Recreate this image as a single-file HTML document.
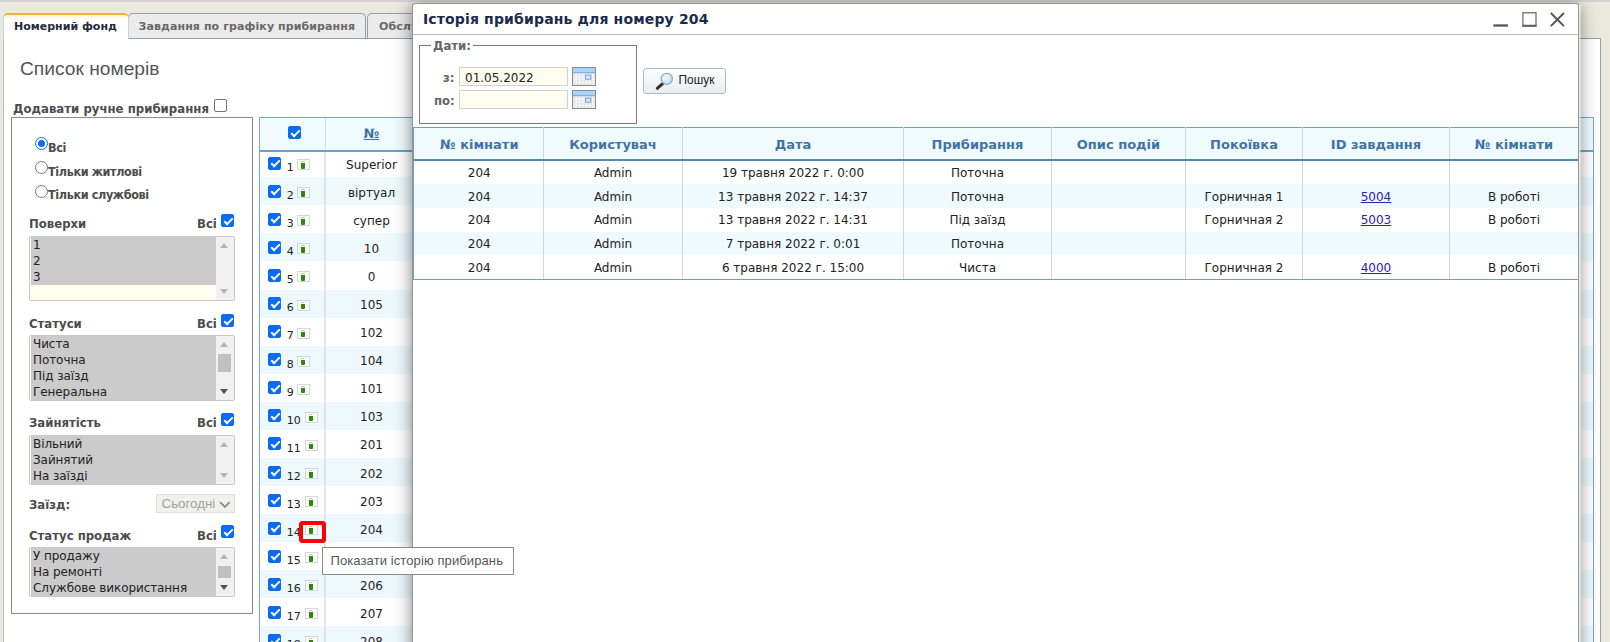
<!DOCTYPE html>
<html lang="uk">
<head>
<meta charset="utf-8">
<title>Номерний фонд</title>
<style>
*{box-sizing:border-box}
html,body{margin:0;padding:0}
body{width:1610px;height:642px;overflow:hidden;position:relative;background:#eae9dd;font-family:"DejaVu Sans","Liberation Sans",sans-serif;font-size:12px;color:#222}
.abs{position:absolute}
#topstrip{left:0;top:0;width:1610px;height:2px;background:#d3d3d3}
/* tabs */
.tab{position:absolute;top:13px;height:25px;border:1px solid #93a1ab;border-bottom:none;border-radius:5px 5px 0 0;background:#ebebeb;font-weight:bold;font-size:11px;letter-spacing:.09px;line-height:25px;color:#696969;white-space:nowrap;padding-left:9.5px}
.tab.active{letter-spacing:0;padding-left:10px;background:linear-gradient(#fff3d2 0,#fff 5px);color:#262a3c;border-color:#c9d2da;border-top:2px solid #f0b240;line-height:23.5px;z-index:3;height:26px}
#panel{left:3px;top:38px;width:1598px;height:620px;background:#fff;border:1px solid #93a1ab;border-left-color:#b4bfc8}
h1{position:absolute;left:20px;top:58px;margin:0;font:normal 19.2px "Liberation Sans",sans-serif;color:#555;white-space:nowrap}
#manual{left:13px;top:100.5px;letter-spacing:.03px;font:bold 13px/16px "DejaVu Sans Condensed","DejaVu Sans",sans-serif;color:#4c4c4c;white-space:nowrap}
.cb{display:inline-block;width:13px;height:13px;border:1px solid #767676;border-radius:2px;background:#fff;vertical-align:middle;position:relative}
.cb.on{background:#0a6cf5;border-color:#0a6cf5}
.cb.on::after{content:"";position:absolute;left:3.5px;top:0.5px;width:3px;height:7px;border:solid #fff;border-width:0 2px 2px 0;transform:rotate(45deg)}
#filters{left:11px;top:117px;width:242px;height:497px;border:1px solid #8b8b8b;background:#fff}
.radio{position:absolute;width:13px;height:13px;border:1px solid #767676;border-radius:50%;background:#fff}
.radio.on{border-color:#0a6cf5}
.radio.on::after{content:"";position:absolute;left:2px;top:2px;width:7px;height:7px;border-radius:50%;background:#0a6cf5}
.flabel{position:absolute;font:bold 13px/16px "DejaVu Sans Condensed","DejaVu Sans",sans-serif;color:#4c4c4c;white-space:nowrap}
.lst{position:absolute;left:28px;width:206px;padding-left:1px;border:1px solid #c8c8c8;border-radius:2px;background:#fffdee;overflow:hidden;font:12px/16px "DejaVu Sans",sans-serif;color:#222}
.lst .it{background:#cbcbcb;height:16px;padding-left:2px;margin-right:18px;letter-spacing:-.08px;white-space:nowrap;line-height:16px}
.lst .sb{position:absolute;right:0;top:0;bottom:0;width:18px;background:#f1f1f1}

.flabel.sm{font-size:12.5px;letter-spacing:-.37px}
.sb i{position:absolute;left:0;width:17px;display:block}
.sb i.up{top:0;height:17px}
.sb i.dn{bottom:0;height:17px}
.sb i.up::after{content:"";position:absolute;left:4px;top:6px;border:4.5px solid transparent;border-top:none;border-bottom:5px solid #505050}
.sb i.dn::after{content:"";position:absolute;left:4px;top:6px;border:4.5px solid transparent;border-bottom:none;border-top:5px solid #505050}
.sb i.dis::after{border-top-color:#b5b5b5;border-bottom-color:#b5b5b5}
.sb i.thumb{left:2px;width:13px;background:#c1c1c1}
.sel{width:79px;height:19px;border:1px solid #dedede;background:#f0f0ed;color:#a2a2a2;font:13.33px/17px "Liberation Sans",sans-serif;padding-left:4.5px;white-space:nowrap}
/* grid */
#grid{left:259px;top:116.5px;width:1335px;height:540px;border:1px solid #77a6c9;background:#fff}
.row{position:absolute;left:0;width:100%;height:28.1px}
.row.alt{background:#eef9fd}

.cb.abs{position:absolute}
.ghead{position:absolute;left:0;top:0;width:100%;height:34px;background:#f0fbfe;border-bottom:2px solid #6f9fc3;z-index:3}
.ghead::after{content:"";position:absolute;left:64.5px;top:0;width:1px;height:32px;background:#dcdcdc}
.hno{position:absolute;left:65px;width:93px;top:8px;text-align:center;font-weight:bold;font-size:13px;color:#3f73a8;text-decoration:underline}
.vsep{position:absolute;left:64.2px;top:0;width:1.6px;height:100%;background:#e3e3e3;z-index:2}
.num{position:absolute;left:26.8px;top:11.9px;font-size:11px;color:#222}
.ico{position:absolute;top:10px;width:13px;height:11px;border:1px solid #d6d6d6;background:#fff}
.ico i{position:absolute;left:3.4px;top:1px;width:4px;height:7.6px;border-radius:1px;background:linear-gradient(#a9d694 0,#a9d694 1.4px,#fff 1.4px,#fff 1.8px,#2b8a0a 1.8px,#2b8a0a 100%)}
.val{position:absolute;left:65px;width:93px;top:8.6px;text-align:center;font-size:12px;color:#222}
.hl{left:39px;top:403.3px;width:26.6px;height:22.5px;border:4.2px solid #fe0000;border-radius:3.5px;z-index:3}

#shadow{left:413px;top:4px;width:1165px;height:660px;box-shadow:0 3px 16px 1px rgba(0,0,0,.5);z-index:9}
#modal{left:413px;top:4px;width:1165px;height:660px;background:#fff;z-index:10;box-shadow:0 0 0 1px #949494;border-radius:2px 2px 0 0}
.mtitle{position:absolute;left:10px;top:7px;font-weight:bold;font-size:14px;letter-spacing:.15px;color:#1d2a4b;white-space:nowrap}
.mline{left:0;top:30px;width:100%;height:1px;background:#b9b9b9}
fieldset{position:absolute;left:6px;top:35px;width:218px;height:85px;margin:0;padding:0;border:1px solid #7c7c7c}
legend{font:bold 13px/13px "DejaVu Sans Condensed","DejaVu Sans",sans-serif;color:#666;padding:0 2px;margin-left:11px}
.dl{font:bold 13px/16px "DejaVu Sans Condensed","DejaVu Sans",sans-serif;color:#666}
.inp{width:109px;height:19px;border:1px solid #d0d0d0;background:#fffdee;font-size:12px;line-height:20px;padding-left:5px;color:#222}
.cal{width:24px;height:19px;border:1px solid #9aa8b8;background:linear-gradient(#6d9fd6 0,#9fc3ea 4px,#e9eef4 4px,#dfe5ec 100%)}
.cal i{position:absolute;left:13px;top:8px;width:5px;height:5px;border:1px solid #4a7fc0;background:#fff}
.btn{left:230px;top:64px;width:83px;height:26px;border:1px solid #a8bfc2;border-radius:3px;background:linear-gradient(#fdfdfd,#e9ecef);font:12px/23px "Liberation Sans",sans-serif;color:#222}
.btn span{position:absolute;left:34.5px;top:0;font-size:11.9px}
#mt{position:absolute;left:0;top:122.9px;border-collapse:collapse;table-layout:fixed;width:1164.5px;font-size:12px;color:#222}
#mt th{height:32.6px;background:#f0fbfe;color:#3f73a8;font-weight:bold;font-size:13px;border-top:1px solid #6f9fc3;border-bottom:2px solid #5589b5;border-right:1px solid #d5d5d5;padding:2px 0 0;text-align:center}
#mt td{height:23.86px;padding:1.5px 0 0;text-align:center;border-right:1px solid #d5d5d5}
#mt th:last-child,#mt td:last-child{border-right:none}
#mt th:first-child,#mt td:first-child{border-left:1px solid #6f9fc3;padding-left:1.6px}
#mt tr.alt td{background:#eefafe}
#mt tbody tr:last-child td{border-bottom:1px solid #6f9fc3}
#mt a{color:#2a22b8;text-decoration:underline}
#tip{left:322px;top:547px;width:192px;height:28px;border:1px solid #8a8a8a;background:#fff;z-index:20;font:13px/26px "Liberation Sans",sans-serif;letter-spacing:.1px;color:#575757;padding-left:7.5px;white-space:nowrap}
#modal::after{content:"";position:absolute;right:-3px;top:1px;width:2px;height:100%;background:linear-gradient(to right,rgba(255,255,255,.85),rgba(255,255,255,.25))}
</style>
</head>
<body>
<div id="topstrip" class="abs"></div>
<div id="panel" class="abs"></div>
<div class="tab active" style="left:3px;width:126px">Номерний фонд</div>
<div class="tab" style="left:128px;width:238px">Завдання по графіку прибирання</div>
<div class="tab" style="left:367px;width:120px;padding-left:11px">Обслуговування</div>
<h1>Список номерів</h1>
<div id="manual" class="abs">Додавати ручне прибирання <span class="cb" style="top:-3.5px;margin-left:1.2px"></span></div>
<div id="filters" class="abs">
<span class="radio on" style="left:23px;top:19px"></span><span class="flabel sm" style="left:36px;top:21.7px">Всі</span>
<span class="radio" style="left:23px;top:43px"></span><span class="flabel sm" style="left:36px;top:45.8px">Тільки житлові</span>
<span class="radio" style="left:23px;top:67px"></span><span class="flabel sm" style="left:36px;top:69.3px">Тільки службові</span>

<span class="flabel" style="left:17px;top:98px">Поверхи</span><span class="flabel" style="left:185px;top:98px">Всі</span><span class="cb on abs" style="left:209px;top:96px"></span>
<div class="lst" style="left:17px;top:118px;height:65px"><div class="it">1</div><div class="it">2</div><div class="it">3</div><div class="sb"><i class="up dis"></i><i class="dn dis"></i></div></div>

<span class="flabel" style="left:17px;top:198px">Статуси</span><span class="flabel" style="left:185px;top:198px">Всі</span><span class="cb on abs" style="left:209px;top:196px"></span>
<div class="lst" style="left:17px;top:217px;height:66px"><div class="it">Чиста</div><div class="it">Поточна</div><div class="it">Під заїзд</div><div class="it">Генеральна</div><div class="sb"><i class="up dis"></i><i class="thumb" style="top:18px;height:18px"></i><i class="dn"></i></div></div>

<span class="flabel" style="left:17px;top:297px">Зайнятість</span><span class="flabel" style="left:185px;top:297px">Всі</span><span class="cb on abs" style="left:209px;top:295px"></span>
<div class="lst" style="left:17px;top:317px;height:50px"><div class="it">Вільний</div><div class="it">Зайнятий</div><div class="it">На заїзді</div><div class="sb"><i class="up dis"></i><i class="dn dis"></i></div></div>

<span class="flabel" style="left:17px;top:379px">Заїзд:</span>
<div class="sel abs" style="left:144px;top:376px">Сьогодні<svg width="12" height="8" viewBox="0 0 12 8" style="position:absolute;left:62px;top:5.5px"><path d="M1.2 1.2 L5.9 6 L10.6 1.2" fill="none" stroke="#8c8c8c" stroke-width="1.8"/></svg></div>

<span class="flabel" style="left:17px;top:410px">Статус продаж</span><span class="flabel" style="left:185px;top:410px">Всі</span><span class="cb on abs" style="left:209px;top:407px"></span>
<div class="lst" style="left:17px;top:429px;height:50px"><div class="it">У продажу</div><div class="it">На ремонті</div><div class="it">Службове використання</div><div class="sb"><i class="up dis"></i><i class="thumb" style="top:18px;height:12px"></i><i class="dn"></i></div></div>
</div>
<div id="grid" class="abs">
<div class="ghead"><span class="cb on abs" style="left:28px;top:8.6px"></span><span class="hno">№</span></div>
<div class="vsep"></div>
<div class="row" style="top:31.60px"><span class="cb on abs" style="left:8px;top:7.6px"></span><span class="num">1</span><span class="ico" style="left:37px"><i></i></span><span class="val">Superior</span></div>
<div class="row alt" style="top:59.68px"><span class="cb on abs" style="left:8px;top:7.6px"></span><span class="num">2</span><span class="ico" style="left:37px"><i></i></span><span class="val">віртуал</span></div>
<div class="row" style="top:87.76px"><span class="cb on abs" style="left:8px;top:7.6px"></span><span class="num">3</span><span class="ico" style="left:37px"><i></i></span><span class="val">супер</span></div>
<div class="row alt" style="top:115.84px"><span class="cb on abs" style="left:8px;top:7.6px"></span><span class="num">4</span><span class="ico" style="left:37px"><i></i></span><span class="val">10</span></div>
<div class="row" style="top:143.92px"><span class="cb on abs" style="left:8px;top:7.6px"></span><span class="num">5</span><span class="ico" style="left:37px"><i></i></span><span class="val">0</span></div>
<div class="row alt" style="top:172.00px"><span class="cb on abs" style="left:8px;top:7.6px"></span><span class="num">6</span><span class="ico" style="left:37px"><i></i></span><span class="val">105</span></div>
<div class="row" style="top:200.08px"><span class="cb on abs" style="left:8px;top:7.6px"></span><span class="num">7</span><span class="ico" style="left:37px"><i></i></span><span class="val">102</span></div>
<div class="row alt" style="top:228.16px"><span class="cb on abs" style="left:8px;top:7.6px"></span><span class="num">8</span><span class="ico" style="left:37px"><i></i></span><span class="val">104</span></div>
<div class="row" style="top:256.24px"><span class="cb on abs" style="left:8px;top:7.6px"></span><span class="num">9</span><span class="ico" style="left:37px"><i></i></span><span class="val">101</span></div>
<div class="row alt" style="top:284.32px"><span class="cb on abs" style="left:8px;top:7.6px"></span><span class="num">10</span><span class="ico" style="left:45px"><i></i></span><span class="val">103</span></div>
<div class="row" style="top:312.40px"><span class="cb on abs" style="left:8px;top:7.6px"></span><span class="num">11</span><span class="ico" style="left:45px"><i></i></span><span class="val">201</span></div>
<div class="row alt" style="top:340.48px"><span class="cb on abs" style="left:8px;top:7.6px"></span><span class="num">12</span><span class="ico" style="left:45px"><i></i></span><span class="val">202</span></div>
<div class="row" style="top:368.56px"><span class="cb on abs" style="left:8px;top:7.6px"></span><span class="num">13</span><span class="ico" style="left:45px"><i></i></span><span class="val">203</span></div>
<div class="row alt" style="top:396.64px"><span class="cb on abs" style="left:8px;top:7.6px"></span><span class="num">14</span><span class="ico" style="left:45px"><i></i></span><span class="val">204</span></div>
<div class="row" style="top:424.72px"><span class="cb on abs" style="left:8px;top:7.6px"></span><span class="num">15</span><span class="ico" style="left:45px"><i></i></span><span class="val">205</span></div>
<div class="row alt" style="top:452.80px"><span class="cb on abs" style="left:8px;top:7.6px"></span><span class="num">16</span><span class="ico" style="left:45px"><i></i></span><span class="val">206</span></div>
<div class="row" style="top:480.88px"><span class="cb on abs" style="left:8px;top:7.6px"></span><span class="num">17</span><span class="ico" style="left:45px"><i></i></span><span class="val">207</span></div>
<div class="row alt" style="top:508.96px"><span class="cb on abs" style="left:8px;top:7.6px"></span><span class="num">18</span><span class="ico" style="left:45px"><i></i></span><span class="val">208</span></div>
<div class="hl abs"></div>
</div>
<div id="shadow" class="abs"></div>
<div id="modal" class="abs">
<div class="mtitle">Історія прибирань для номеру 204</div>
<svg class="abs" style="left:1080px;top:7px" width="76" height="20" viewBox="0 0 76 20"><g fill="none" stroke="#55565a"><path d="M0.4 14.5H14.9" stroke-width="2.3"/><path d="M29.9 14.2V1.7H43V14.2" stroke="#7e7e80" stroke-width="1.4"/><path d="M29.2 14.8H43.7" stroke="#5e5e60" stroke-width="2.1"/><path d="M57.8 2 L70.9 15.1 M70.9 2 L57.8 15.1" stroke-width="2"/></g></svg>
<div class="mline abs"></div>
<fieldset><legend>Дати:</legend></fieldset>
<span class="dl abs" style="left:30px;top:66px">з:</span>
<span class="dl abs" style="left:21px;top:89px">по:</span>
<div class="inp abs" style="left:46px;top:63px">01.05.2022</div>
<div class="inp abs" style="left:46px;top:86px"></div>
<svg class="abs" style="left:159px;top:63px" width="24" height="19" viewBox="0 0 24 19"><rect x="0.5" y="0.5" width="23" height="18" fill="#e4e4e4" stroke="#8d8d8d"/><rect x="1" y="1" width="22" height="5" fill="#abd3f7"/><rect x="1" y="5" width="22" height="1.2" fill="#7db1e6"/><g stroke="#fbfbfb" stroke-width="0.8"><path d="M4.2 6.5V18M7.6 6.5V18M11 6.5V18M14.4 6.5V18M17.8 6.5V18M21 6.5V18M1 9.2H23M1 12.2H23M1 15.2H23"/></g><rect x="13.6" y="8.2" width="5.2" height="4" fill="#dcebfb" stroke="#7baee6" stroke-width="1.2"/></svg>
<svg class="abs" style="left:159px;top:86px" width="24" height="19" viewBox="0 0 24 19"><rect x="0.5" y="0.5" width="23" height="18" fill="#e4e4e4" stroke="#8d8d8d"/><rect x="1" y="1" width="22" height="5" fill="#abd3f7"/><rect x="1" y="5" width="22" height="1.2" fill="#7db1e6"/><g stroke="#fbfbfb" stroke-width="0.8"><path d="M4.2 6.5V18M7.6 6.5V18M11 6.5V18M14.4 6.5V18M17.8 6.5V18M21 6.5V18M1 9.2H23M1 12.2H23M1 15.2H23"/></g><rect x="13.6" y="8.2" width="5.2" height="4" fill="#dcebfb" stroke="#7baee6" stroke-width="1.2"/></svg>
<div class="btn abs"><svg width="20" height="20" viewBox="0 0 20 20" style="position:absolute;left:10px;top:2px"><defs><radialGradient id="lens" cx="0.4" cy="0.35" r="0.7"><stop offset="0" stop-color="#f4f9fd"/><stop offset="1" stop-color="#bcd9f1"/></radialGradient></defs><path d="M3.3 17.3 L9.2 12.2" stroke="#2f2f2f" stroke-width="3" stroke-linecap="round"/><circle cx="12.8" cy="7.9" r="5.6" fill="url(#lens)" stroke="#9aa6b2" stroke-width="1.2"/></svg><span>Пошук</span></div>
<table id="mt"><colgroup><col style="width:130px"><col style="width:139px"><col style="width:221px"><col style="width:148px"><col style="width:134px"><col style="width:117px"><col style="width:147px"><col style="width:128.5px"></colgroup><thead><tr><th>№ кімнати</th><th>Користувач</th><th>Дата</th><th>Прибирання</th><th>Опис подій</th><th>Покоївка</th><th>ID завдання</th><th>№ кімнати</th></tr></thead><tbody>
<tr><td>204</td><td>Admin</td><td>19 травня 2022 г. 0:00</td><td>Поточна</td><td></td><td></td><td></td><td></td></tr>
<tr class="alt"><td>204</td><td>Admin</td><td>13 травня 2022 г. 14:37</td><td>Поточна</td><td></td><td>Горничная 1</td><td><a>5004</a></td><td>В роботі</td></tr>
<tr><td>204</td><td>Admin</td><td>13 травня 2022 г. 14:31</td><td>Під заїзд</td><td></td><td>Горничная 2</td><td><a>5003</a></td><td>В роботі</td></tr>
<tr class="alt"><td>204</td><td>Admin</td><td>7 травня 2022 г. 0:01</td><td>Поточна</td><td></td><td></td><td></td><td></td></tr>
<tr><td>204</td><td>Admin</td><td>6 травня 2022 г. 15:00</td><td>Чиста</td><td></td><td>Горничная 2</td><td><a>4000</a></td><td>В роботі</td></tr>
</tbody></table>
</div>
<div id="tip" class="abs">Показати історію прибирань</div>
</body>
</html>
